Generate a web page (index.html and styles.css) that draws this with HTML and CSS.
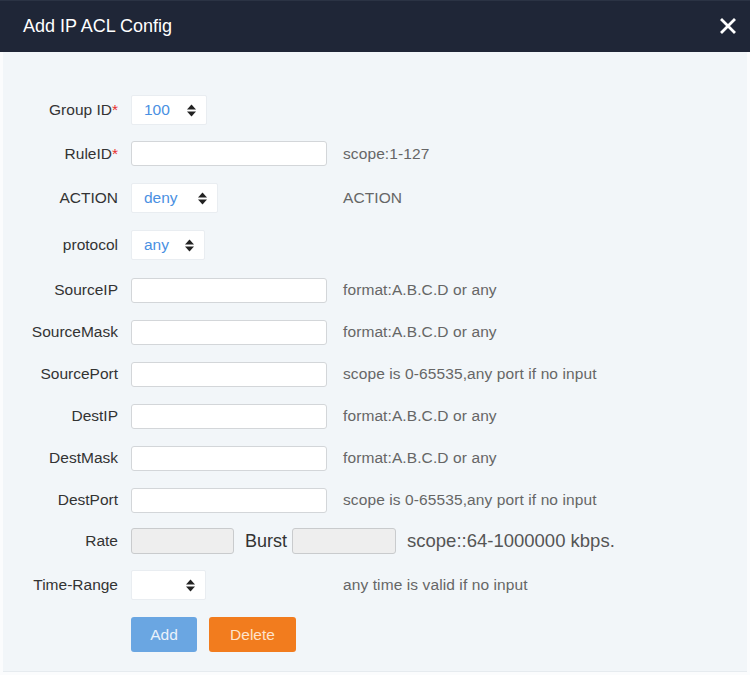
FILE: index.html
```html
<!DOCTYPE html>
<html>
<head>
<meta charset="utf-8">
<title>Add IP ACL Config</title>
<link rel="stylesheet" href="styles.css">
</head>
<body>
<div class="modal">
  <div class="modal-header">
    <span class="modal-title">Add IP ACL Config</span>
    <svg class="close" width="16" height="16" viewBox="0 0 16 16"><path d="M2 2 L14 14 M14 2 L2 14" stroke="#fff" stroke-width="2.8" stroke-linecap="square"/></svg>
  </div>
  <div class="modal-body">
    <div class="row r1">
      <label class="lbl">Group ID<span class="req">*</span></label>
      <div class="field"><div class="select w76"><span>100</span><svg class="arrow" width="9" height="13" viewBox="0 0 9 13"><polygon points="0,5.5 4.5,0.5 9,5.5" fill="#222"/><polygon points="0,7.5 9,7.5 4.5,12.5" fill="#222"/></svg></div></div>
    </div>
    <div class="row r2">
      <label class="lbl">RuleID<span class="req">*</span></label>
      <div class="field"><input class="text" type="text"></div>
      <span class="hint">scope:1-127</span>
    </div>
    <div class="row r3">
      <label class="lbl">ACTION</label>
      <div class="field"><div class="select w87"><span>deny</span><svg class="arrow" width="9" height="13" viewBox="0 0 9 13"><polygon points="0,5.5 4.5,0.5 9,5.5" fill="#222"/><polygon points="0,7.5 9,7.5 4.5,12.5" fill="#222"/></svg></div></div>
      <span class="hint">ACTION</span>
    </div>
    <div class="row r4">
      <label class="lbl">protocol</label>
      <div class="field"><div class="select w74"><span>any</span><svg class="arrow" width="9" height="13" viewBox="0 0 9 13"><polygon points="0,5.5 4.5,0.5 9,5.5" fill="#222"/><polygon points="0,7.5 9,7.5 4.5,12.5" fill="#222"/></svg></div></div>
    </div>
    <div class="row r42">
      <label class="lbl">SourceIP</label>
      <div class="field"><input class="text" type="text"></div>
      <span class="hint">format:A.B.C.D or any</span>
    </div>
    <div class="row r42">
      <label class="lbl">SourceMask</label>
      <div class="field"><input class="text" type="text"></div>
      <span class="hint">format:A.B.C.D or any</span>
    </div>
    <div class="row r42">
      <label class="lbl">SourcePort</label>
      <div class="field"><input class="text" type="text"></div>
      <span class="hint">scope is 0-65535,any port if no input</span>
    </div>
    <div class="row r42">
      <label class="lbl">DestIP</label>
      <div class="field"><input class="text" type="text"></div>
      <span class="hint">format:A.B.C.D or any</span>
    </div>
    <div class="row r42">
      <label class="lbl">DestMask</label>
      <div class="field"><input class="text" type="text"></div>
      <span class="hint">format:A.B.C.D or any</span>
    </div>
    <div class="row r42">
      <label class="lbl">DestPort</label>
      <div class="field"><input class="text" type="text"></div>
      <span class="hint">scope is 0-65535,any port if no input</span>
    </div>
    <div class="row rrate">
      <label class="lbl">Rate</label>
      <div class="rate-group">
        <input class="text disabled rate" type="text" disabled>
        <span class="burst">Burst</span>
        <input class="text disabled burst-in" type="text" disabled>
        <span class="rate-hint">scope::64-1000000 kbps.</span>
      </div>
    </div>
    <div class="row rtime">
      <label class="lbl">Time-Range</label>
      <div class="field"><div class="select w75"><span></span><svg class="arrow" width="9" height="13" viewBox="0 0 9 13"><polygon points="0,5.5 4.5,0.5 9,5.5" fill="#222"/><polygon points="0,7.5 9,7.5 4.5,12.5" fill="#222"/></svg></div></div>
      <span class="hint">any time is valid if no input</span>
    </div>
    <div class="row rbtn">
      <div class="buttons">
        <button class="btn btn-add">Add</button>
        <button class="btn btn-del">Delete</button>
      </div>
    </div>
  </div>
</div>
</body>
</html>
```
FILE: styles.css
```css
html, body {
  margin: 0;
  padding: 0;
}
body {
  background: #fbfcfd;
  font-family: "Liberation Sans", Arial, sans-serif;
  width: 750px;
  height: 675px;
  overflow: hidden;
}
.modal {
  width: 750px;
}
.modal-header {
  height: 52px;
  background: #1f2637;
  border-top: 1px solid #2b3344;
  box-sizing: border-box;
  display: flex;
  align-items: center;
  justify-content: space-between;
  padding: 0 14px 0 23px;
}
.modal-title {
  color: #ffffff;
  font-size: 18px;
  margin-top: -1px;
}
.close {
  display: block;
  margin-top: -1px;
}
.modal-body {
  margin: 0 3px;
  height: 620px;
  background: #f2f6f9;
  padding-top: 36px;
  box-sizing: border-box;
  border-bottom: 1px solid #e6ebef;
}
.row {
  display: flex;
  align-items: center;
}
.r1 { height: 44px; }
.r2 { height: 43px; }
.r3 { height: 46px; }
.r4 { height: 48px; }
.r42 { height: 42px; }
.rrate { height: 40px; }
.rtime { height: 48px; }
.rbtn { height: 51px; }
.lbl {
  width: 115px;
  text-align: right;
  font-size: 15.5px;
  color: #333333;
  margin-right: 13px;
  flex: none;
}
.req {
  color: #e8312f;
}
.field {
  width: 196px;
  flex: none;
  display: flex;
  align-items: center;
}
.hint {
  margin-left: 16px;
  font-size: 15.5px;
  color: #666666;
  letter-spacing: 0.1px;
}
.text {
  width: 196px;
  height: 25px;
  box-sizing: border-box;
  border: 1px solid #d3d6d9;
  border-radius: 3px;
  background: #ffffff;
  margin: 0;
  padding: 0 6px;
  font-family: inherit;
  outline: none;
}
.select {
  height: 30px;
  box-sizing: border-box;
  background: #ffffff;
  border: 1px solid #e9edf1;
  border-radius: 2px;
  display: flex;
  align-items: center;
  justify-content: space-between;
  padding: 0 10px 0 12px;
  font-size: 15.5px;
  color: #4a90e2;
}
.w76 { width: 76px; }
.w87 { width: 87px; }
.w74 { width: 74px; }
.w75 { width: 75px; }
.arrow {
  display: block;
  flex: none;
}
.rate-group {
  display: flex;
  align-items: center;
}
.text.disabled {
  background: #eeeeee;
  border: 1px solid #c9cbcd;
  height: 26px;
}
.text.rate {
  width: 103px;
}
.text.burst-in {
  width: 104px;
}
.burst {
  margin: 0 5px 0 11px;
  font-size: 18px;
  color: #333333;
}
.rate-hint {
  margin-left: 11px;
  font-size: 18.5px;
  color: #555555;
}
.buttons {
  margin-left: 128px;
  display: flex;
  gap: 12px;
}
.btn {
  height: 35px;
  border: none;
  border-radius: 3px;
  font-family: inherit;
  font-size: 15.5px;
  padding: 0;
  cursor: pointer;
}
.btn-add {
  width: 66px;
  background: #6aa6e2;
  color: #e9f2fb;
}
.btn-del {
  width: 87px;
  background: #f27c1e;
  color: #fde3cc;
}
```
